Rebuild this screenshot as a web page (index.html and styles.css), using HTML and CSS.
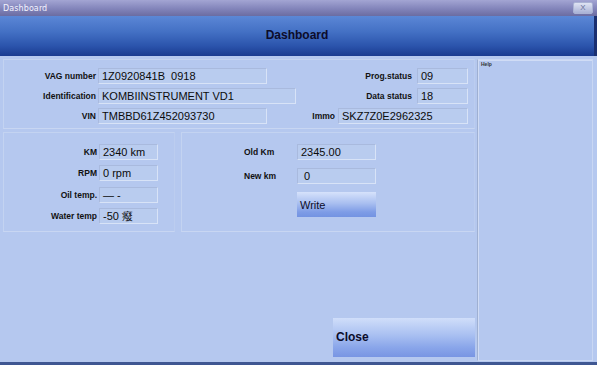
FILE: index.html
```html
<!DOCTYPE html>
<html>
<head>
<meta charset="utf-8">
<link rel="stylesheet" href="styles.css">
</head>
<body>
<div class="window">
  <div class="titlebar">
    <span class="tb-title">Dashboard</span>
    <span class="tb-close">X</span>
  </div>
  <div class="header">Dashboard</div>
  <div class="content">
    <div class="main">
      <div class="panel top">
        <div class="row">
          <div class="grp"><span class="lbl">VAG number</span><span class="fld w165">1Z0920841B&nbsp; 0918</span></div>
          <div class="grp right"><span class="lbl">Prog.status</span><span class="fld w51">09</span></div>
        </div>
        <div class="row">
          <div class="grp"><span class="lbl">Identification</span><span class="fld w197">KOMBIINSTRUMENT VD1</span></div>
          <div class="grp right"><span class="lbl">Data status</span><span class="fld w51">18</span></div>
        </div>
        <div class="row">
          <div class="grp"><span class="lbl">VIN</span><span class="fld w165">TMBBD61Z452093730</span></div>
          <div class="grp right tight"><span class="lbl">Immo</span><span class="fld w130">SKZ7Z0E2962325</span></div>
        </div>
      </div>
      <div class="mid">
        <div class="panel gauges">
          <div class="grow"><span class="lbl">KM</span><span class="fld w59">2340 km</span></div>
          <div class="grow"><span class="lbl">RPM</span><span class="fld w59">0 rpm</span></div>
          <div class="grow"><span class="lbl">Oil temp.</span><span class="fld w59">— -</span></div>
          <div class="grow"><span class="lbl">Water temp</span><span class="fld w59">-50 癈</span></div>
        </div>
        <div class="panel odo">
          <div class="orow"><span class="olbl">Old Km</span><span class="fld w79">2345.00</span></div>
          <div class="orow"><span class="olbl">New km</span><span class="fld w79">&nbsp;0</span></div>
          <div class="orow"><span class="olbl"></span><button class="btn write">Write</button></div>
        </div>
      </div>
      <div class="actions">
        <button class="btn close">Close</button>
      </div>
    </div>
    <div class="help"><span class="help-title">Help</span></div>
  </div>
</div>
</body>
</html>
```

FILE: styles.css
```css
html, body {
  margin: 0;
  padding: 0;
}
body {
  width: 597px;
  height: 365px;
  overflow: hidden;
  font-family: "Liberation Sans", Arial, sans-serif;
  background: #b5c8ef;
}
.window {
  display: flex;
  flex-direction: column;
  width: 597px;
  height: 365px;
}
.titlebar {
  height: 16px;
  flex: none;
  display: flex;
  align-items: center;
  justify-content: space-between;
  padding: 0 4px 0 3px;
  background: linear-gradient(#a3a5d3, #8284ba 55%, #6b6ca1);
  box-sizing: border-box;
}
.tb-title {
  color: #f4f4ff;
  font-family: "DejaVu Sans", sans-serif;
  font-size: 8px;
  letter-spacing: 0.1px;
}
.tb-close {
  width: 20px;
  height: 12px;
  box-sizing: border-box;
  border: 1px solid #aab2d4;
  border-radius: 2px;
  background: linear-gradient(#dfe3f3, #a9b2d6);
  color: #6a7098;
  font-size: 8px;
  line-height: 10px;
  text-align: center;
}
.header {
  height: 40px;
  flex: none;
  display: flex;
  align-items: center;
  justify-content: center;
  background: linear-gradient(#5b87d6, #4370c4 40%, #2b54ac 75%, #1a3b90);
  border-right: 3px solid #1a2f70;
  color: #0c0c2a;
  font-weight: bold;
  font-size: 12px;
  padding-bottom: 2px;
  box-sizing: border-box;
}
.content {
  flex: 1;
  display: flex;
  background: #b5c8ef;
  border-bottom: 3px solid #3f5792;
  min-height: 0;
}
.main {
  width: 472px;
  margin-left: 3px;
  padding-top: 3px;
  display: flex;
  flex-direction: column;
}
.panel {
  border: 1px solid #c3d3f1;
  border-right-color: #bccdef;
  border-bottom-color: #c8d6f2;
  box-sizing: border-box;
}
.top {
  height: 70px;
  padding: 8px 6px 0 0;
  display: flex;
  flex-direction: column;
  gap: 4px;
}
.row {
  display: flex;
  align-items: center;
  height: 16px;
}
.grp {
  display: flex;
  align-items: center;
  gap: 2px;
}
.grp .lbl {
  width: 92px;
  text-align: right;
}
.grp.right {
  margin-left: auto;
  gap: 5px;
}
.grp.right .lbl {
  width: auto;
}
.grp.tight {
  gap: 3px;
}
.lbl {
  font-size: 8.5px;
  font-weight: bold;
  color: #111;
  white-space: nowrap;
}
.fld {
  display: inline-block;
  height: 16px;
  box-sizing: border-box;
  border: 1px solid #a9bade;
  border-right-color: #d8e3f7;
  border-bottom-color: #d8e3f7;
  background: #b9ccef;
  font-size: 11px;
  line-height: 14px;
  padding-left: 3px;
  color: #0b0b0b;
  white-space: nowrap;
}
.w165 { width: 169px; }
.w197 { width: 198px; }
.w51 { width: 51px; }
.w130 { width: 130px; }
.w59 { width: 59px; }
.w79 { width: 79px; }
.mid {
  display: flex;
  gap: 6px;
  margin-top: 3px;
  height: 100px;
}
.gauges {
  width: 172px;
  padding: 11px 0 0 0;
  display: flex;
  flex-direction: column;
  gap: 5.4px;
}
.grow {
  display: flex;
  align-items: center;
  gap: 2px;
}
.grow .lbl {
  width: 93px;
  text-align: right;
}
.odo {
  flex: 1;
  padding: 11px 0 0 62px;
  display: flex;
  flex-direction: column;
  gap: 8px;
}
.orow {
  display: flex;
  align-items: center;
}
.olbl {
  width: 53px;
  font-size: 8.5px;
  font-weight: bold;
  color: #111;
}
.btn {
  font-family: "Liberation Sans", Arial, sans-serif;
  border: none;
  margin: 0;
  text-align: left;
  color: #0c0c2a;
  background: linear-gradient(#d6e2fb, #a9bff0 45%, #7e9ce6 80%, #7393e2);
  box-sizing: border-box;
}
.write {
  width: 79px;
  height: 25px;
  font-size: 11px;
  padding: 0 0 0 3px;
}
.actions {
  margin-top: auto;
  margin-bottom: 5px;
  display: flex;
  justify-content: flex-end;
}
.close {
  width: 142px;
  height: 39px;
  font-size: 12px;
  font-weight: bold;
  padding: 0 0 1px 3px;
  background: linear-gradient(#d0defa, #a8bff1 45%, #8aa6ea 75%, #7895e3);
}
.help {
  width: 116px;
  margin: 3px 0 1px 2px;
  border: 1px solid #c9d7f3;
  border-left-color: #9fb0d2;
  box-shadow: inset 1px 1px 0 #d0dcf5;
  box-sizing: border-box;
  padding: 2px 0 0 3px;
}
.help-title {
  font-size: 5px;
  font-weight: bold;
  color: #333;
  display: block;
  line-height: 5px;
}
```
